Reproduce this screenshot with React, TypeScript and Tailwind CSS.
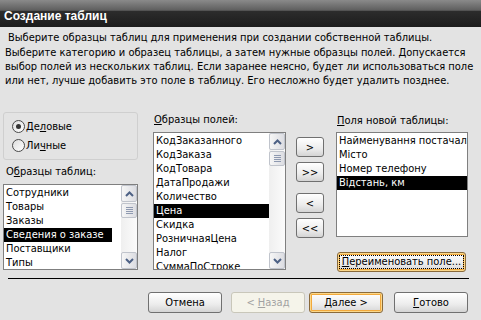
import React from "react";

const font = "font-['DejaVu_Sans_Condensed','DejaVu_Sans',sans-serif]";

const sampleTables = ["Сотрудники", "Товары", "Заказы", "Сведения о заказе", "Поставщики", "Типы"];
const sampleFields = [
  "КодЗаказанного",
  "КодЗаказа",
  "КодТовара",
  "ДатаПродажи",
  "Количество",
  "Цена",
  "Скидка",
  "РозничнаяЦена",
  "Налог",
  "СуммаПоСтроке",
];
const newFields = ["Найменування постачальника", "Місто", "Номер телефону", "Відстань, км"];

function Chevron({ up }: { up?: boolean }) {
  return (
    <svg width="9" height="6" viewBox="0 0 9 6">
      <path
        d={up ? "M1 5 L4.5 1.5 L8 5" : "M1 1 L4.5 4.5 L8 1"}
        fill="none"
        stroke="#4d6185"
        strokeWidth="2"
      />
    </svg>
  );
}

// XP-ish vertical scrollbar: two arrow buttons and a gripped thumb near the top
function Scrollbar() {
  const btn =
    "flex h-[17px] items-center justify-center rounded-[2px] border border-[#c0c4cc] bg-[linear-gradient(to_right,#f6f6f6,#dcdde2)]";
  return (
    <div className="flex w-[16px] shrink-0 flex-col bg-[linear-gradient(to_right,#efefef,#fbfbfb)]">
      <div className={btn}>
        <Chevron up />
      </div>
      <div className="mt-px flex h-[15px] flex-col items-center justify-center gap-[1px] rounded-[2px] border border-[#c0c4cc] bg-[linear-gradient(to_right,#f6f6f6,#dcdde2)]">
        <div className="h-px w-[7px] bg-[#8e99b0]" />
        <div className="h-px w-[7px] bg-[#8e99b0]" />
        <div className="h-px w-[7px] bg-[#8e99b0]" />
        <div className="h-px w-[7px] bg-[#8e99b0]" />
      </div>
      <div className="flex-1" />
      <div className={btn}>
        <Chevron />
      </div>
    </div>
  );
}

function ListBox({
  items,
  selected,
  height,
  scroll,
  narrowSel,
}: {
  items: string[];
  selected: number;
  height: string;
  scroll?: boolean;
  narrowSel?: boolean;
}) {
  return (
    <div className={`flex overflow-hidden border border-[#7f7f7f] bg-white ${height}`}>
      <div className="min-w-0 flex-1 overflow-hidden pt-px">
        {items.map((it, i) => (
          <div
            key={it}
            className={`h-[14px] overflow-hidden whitespace-nowrap pl-[2px] leading-[14px] ${
              i === selected ? "bg-black text-white" : ""
            } ${i === selected && narrowSel ? "w-[108px]" : ""}`}
          >
            {it}
          </div>
        ))}
      </div>
      {scroll && <Scrollbar />}
    </div>
  );
}

function Radio({ checked, children }: { checked?: boolean; children: React.ReactNode }) {
  return (
    <div className="flex h-[13px] items-center">
      <span className="flex h-[13px] w-[13px] items-center justify-center rounded-full border border-[#4a4a4a] bg-[linear-gradient(135deg,#dcdcdc,#ffffff)]">
        {checked && <span className="h-[5px] w-[5px] rounded-full bg-[#333]" />}
      </span>
      <span className="ml-px leading-[13px]">{children}</span>
    </div>
  );
}

function Button({
  children,
  w,
  variant = "normal",
}: {
  children: React.ReactNode;
  w: string;
  variant?: "normal" | "default" | "disabled";
}) {
  const look =
    variant === "disabled"
      ? "border-[#c9c7ba] bg-[#f5f4ea] text-[#a2a2a2]"
      : variant === "default"
        ? "border-[#8a6a3a] bg-[linear-gradient(to_bottom,#ffffff,#ececec_60%,#d6d6d6)] shadow-[inset_0_0_0_1px_#fbd88b,inset_0_0_0_2px_#f2a93b]"
        : "border-[#707070] bg-[linear-gradient(to_bottom,#ffffff,#ececec_60%,#d4d4d4)]";
  return (
    <div
      className={`flex h-full items-center justify-center rounded-[3px] border leading-[13px] ${look} ${w}`}
    >
      {children}
    </div>
  );
}

export default function App() {
  return (
    <div
      className={`${font} flex h-[320px] w-[481px] flex-col overflow-hidden bg-[#e3e3e3] text-[11px] text-black`}
    >
      <div className="h-[27px] shrink-0 bg-[linear-gradient(to_bottom,#8a8a8a_0%,#5e5e5e_38%,#2c2c2c_42%,#1c1c1c_100%)] pl-[4px] pt-[9px] font-['Liberation_Sans',Arial,sans-serif] text-[12px] font-bold leading-[14px] text-white">
        Создание таблиц
      </div>

      <div className="mt-[4px] h-[14px] whitespace-nowrap pl-[8px] leading-[14px]">
        Выберите образцы таблиц для применения при создании собственной таблицы.
      </div>
      <div className="mt-px whitespace-nowrap pl-[5px] leading-[14px]">
        Выберите категорию и образец таблицы, а затем нужные образцы полей. Допускается
        <br />
        выбор полей из нескольких таблиц. Если заранее неясно, будет ли использоваться поле
        <br />
        или нет, лучше добавить это поле в таблицу. Его несложно будет удалить позднее.
      </div>

      <div className="mt-[24px] flex h-[160px] shrink-0 items-start">
        <div className="ml-[3px] w-[135px] shrink-0">
          <div className="flex h-[48px] flex-col gap-[6px] rounded-[3px] border border-[#cfcfcf] pl-[8px] pt-[7px]">
            <Radio checked>
              Де<u>л</u>овые
            </Radio>
            <Radio>
              Ли<u>ч</u>ные
            </Radio>
          </div>
          <div className="mt-[5px] h-[14px] pl-[3px] leading-[14px]">
            О<u>б</u>разцы таблиц:
          </div>
          <div className="mt-[5px]">
            <ListBox items={sampleTables} selected={3} height="h-[86px]" scroll narrowSel />
          </div>
        </div>

        <div className="ml-[15px] w-[133px] shrink-0 pt-px">
          <div className="h-[14px] pl-px leading-[14px]">
            <u>О</u>бразцы полей:
          </div>
          <div className="mt-[5px]">
            <ListBox items={sampleFields} selected={5} height="h-[138px]" scroll />
          </div>
        </div>

        <div className="ml-[10px] flex w-[28px] shrink-0 flex-col pt-[25px]">
          <div className="h-[20px]">
            <Button w="w-[28px]">&gt;</Button>
          </div>
          <div className="mt-[5px] h-[20px]">
            <Button w="w-[28px]">&gt;&gt;</Button>
          </div>
          <div className="mt-[11px] h-[20px]">
            <Button w="w-[28px]">&lt;</Button>
          </div>
          <div className="mt-[5px] h-[20px]">
            <Button w="w-[28px]">&lt;&lt;</Button>
          </div>
        </div>

        <div className="ml-[12px] w-[132px] shrink-0 pt-[2px]">
          <div className="h-[14px] pl-px leading-[14px]">
            <u>П</u>оля новой таблицы:
          </div>
          <div className="mt-[4px]">
            <ListBox items={newFields} selected={3} height="h-[105px]" />
          </div>
          <div className="ml-px mt-[15px] h-[20px]">
            <Button w="w-[129px]" variant="default">
              <span className="border border-dotted border-black px-[2px] leading-[12px]">
                <u>П</u>ереименовать поле...
              </span>
            </Button>
          </div>
        </div>
      </div>

      <div className="mx-[8px] mt-[6px] h-px w-[461px] shrink-0 bg-black" />

      <div className="mt-[13px] flex h-[21px] shrink-0 pl-[148px]">
        <Button w="w-[74px]">Отмена</Button>
        <div className="ml-[9px] h-full">
          <Button w="w-[74px]" variant="disabled">
            &lt; <u className="ml-[3px]">Н</u>азад
          </Button>
        </div>
        <div className="ml-[4px] h-full">
          <Button w="w-[74px]" variant="default">
            <u>Д</u>алее &gt;
          </Button>
        </div>
        <div className="ml-[11px] h-full">
          <Button w="w-[74px]">
            <u>Г</u>отово
          </Button>
        </div>
      </div>
    </div>
  );
}
